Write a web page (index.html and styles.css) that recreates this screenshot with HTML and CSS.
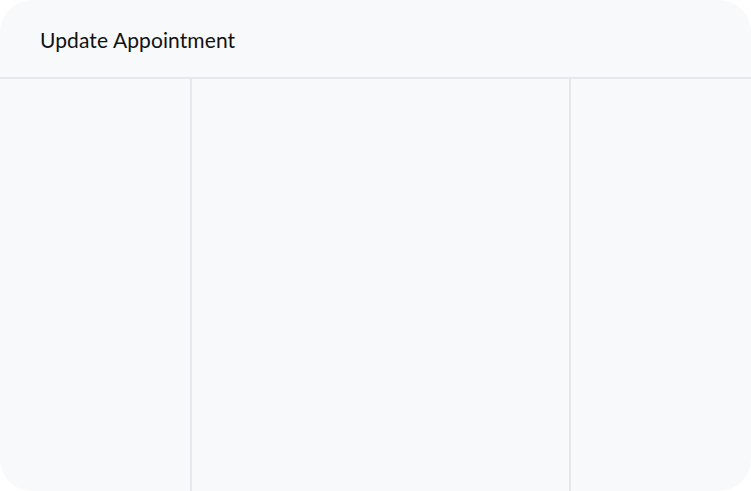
FILE: index.html
```html
<!DOCTYPE html>
<html>
<head>
<meta charset="utf-8">
<link rel="stylesheet" href="styles.css">
</head>
<body>
<div class="card">
  <div class="header">
    <h1 class="title">Update Appointment</h1>
  </div>
  <div class="body">
    <div class="col col-left"></div>
    <div class="col col-mid"></div>
    <div class="col col-right"></div>
  </div>
</div>
</body>
</html>
```
FILE: styles.css
```css
html, body {
  margin: 0;
  padding: 0;
  background: #ffffff;
}
.card {
  width: 751px;
  height: 491px;
  background: #f8f9fb;
  border-radius: 32px;
  display: flex;
  flex-direction: column;
  overflow: hidden;
  font-family: Lato, "Open Sans", sans-serif;
}
.header {
  flex: none;
  height: 79px;
  box-sizing: border-box;
  border-bottom: 2px solid #e6e8ed;
  display: flex;
  align-items: center;
  padding-left: 40px;
  padding-top: 2px;
}
.title {
  margin: 0;
  font-size: 21px;
  font-weight: 400;
  letter-spacing: 0.1px;
  color: #111111;
}
.body {
  flex: 1;
  display: flex;
}
.col-left {
  width: 190px;
  border-right: 2px solid #e6e8ed;
}
.col-mid {
  width: 377px;
  border-right: 2px solid #e6e8ed;
}
.col-right {
  flex: 1;
}
```
